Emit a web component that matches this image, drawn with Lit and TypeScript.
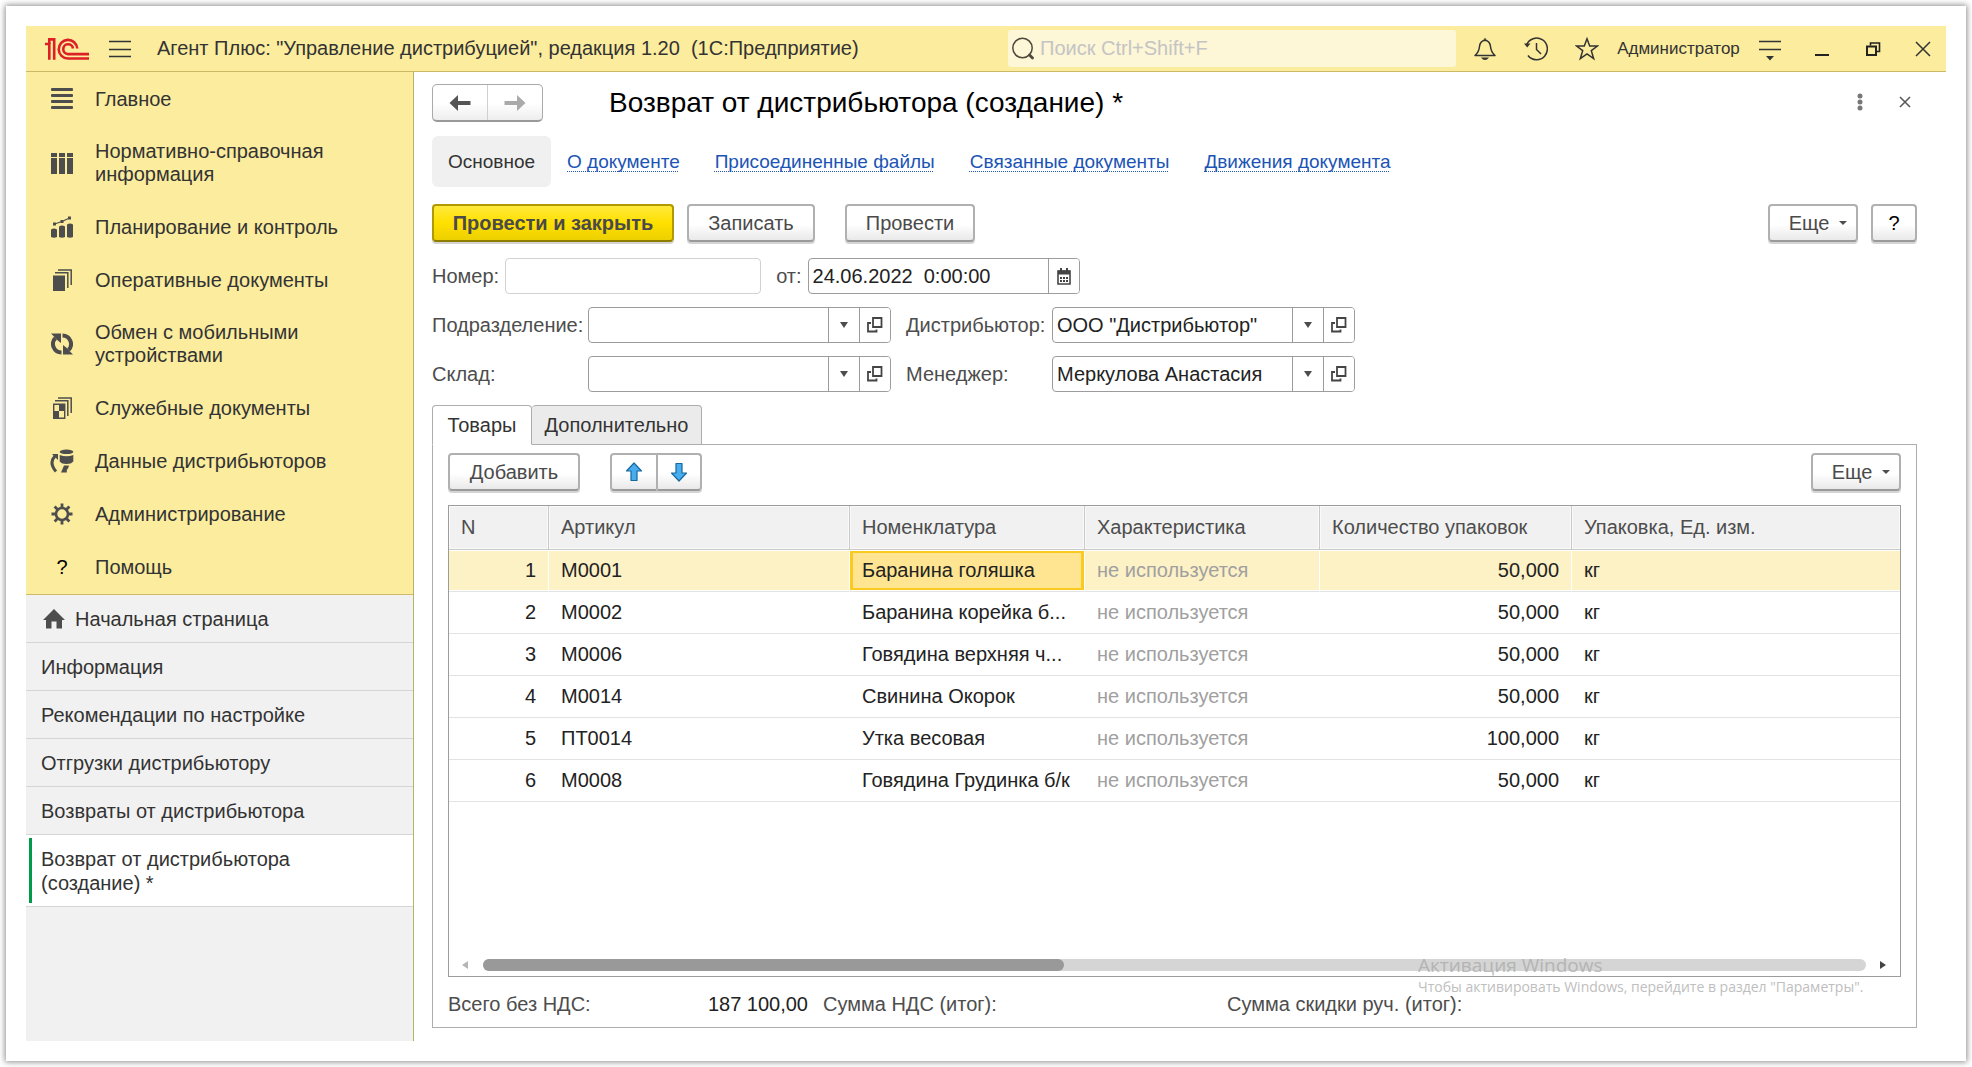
import { LitElement, html, css, svg, nothing } from "lit";
import { customElement, property } from "lit/decorators.js";
import { classMap } from "lit/directives/class-map.js";

const icon = (w: number, h: number, body: unknown) =>
  html`<svg width=${w} height=${h} viewBox="0 0 ${w} ${h}" fill="none" aria-hidden="true">${body}</svg>`;

const C = "#4d4d4d";

const logo = icon(44, 22, svg`
  <g stroke="#dd1f26" stroke-width="2.600">
    <path d="M0 6H4.300V21.800"/><path d="M3 1.400H9.200V21.800"/><path d="M4.300 1.200V6"/>
    <path d="M32.300 10.500A9.300 9.300 0 1 0 23 20.500H44"/>
    <path d="M28 10.500A4.900 4.900 0 1 0 23 16.100H44"/>
  </g>`);

const burger = icon(22, 18, svg`<path d="M0 1.500H22M0 9.500H22M0 16.500H22" stroke="#333" stroke-width="1.400"/>`);

const menuIcons: Record<string, unknown> = {
  list: icon(22, 22, svg`<path d="M1 1.500H21M1 7.500H21M1 13.500H21M1 19.500H21" stroke=${C} stroke-width="2.800" stroke-linecap="round"/>`),
  table: icon(22, 22, svg`<path d="M0 1h6v4H0zM8 1h6v4H8zM16 1h6v4h-6zM0 6h6v16H0zM8 6h6v16H8zM16 6h6v16h-6z" fill=${C}/>`),
  chart: icon(22, 22, svg`
    <path d="M0 13.500q3-2 6 0v7.500q-3 1.600-6 0zM8 10.500q3-2 6 0v10.500q-3 1.600-6 0zM16 8.500q3-2 6 0v12.500q-3 1.600-6 0z" fill=${C}/>
    <path d="M3.500 8L11 5.500L18.500 2" stroke=${C} stroke-width="1.200"/>
    <path d="M2 6.500h3v3H2zM9.500 4h3v3h-3zM17 0.500h3v3h-3z" fill=${C}/>`),
  docs: icon(22, 22, svg`
    <path d="M2 6.500h12V22H2z" fill=${C}/>
    <path d="M4 3.800H16.800V19M7 1H20.200V16" stroke=${C} stroke-width="1.500"/>`),
  sync: icon(22, 22, svg`
    <path d="M10.500 19.500A8.500 8.500 0 0 1 4.500 5" stroke=${C} stroke-width="4"/>
    <path d="M0 0.500H10V10L6.800 7.500L3 3.500z" fill=${C}/>
    <path d="M11.500 2.500A8.500 8.500 0 0 1 17.500 17" stroke=${C} stroke-width="4"/>
    <path d="M22 21.500H12V12L15.200 14.500L19 18.500z" fill=${C}/>`),
  service: icon(22, 22, svg`
    <path d="M2.700 7.200h11V21.300h-11z" stroke=${C} stroke-width="1.400"/>
    <path d="M8 7h6v7H8zM2 14h6v8H2z" fill=${C}/>
    <path d="M4 3.800H16.800V19M7 1H20.200V16" stroke=${C} stroke-width="1.500"/>`),
  data: icon(24, 24, svg`
    <ellipse cx="16.500" cy="2.800" rx="6.800" ry="2.300" fill=${C}/>
    <path d="M9.700 6q6.800 2.600 13.600 0v6.500q-2 2.500-6.800 2.500t-6.800-2.500z" fill=${C}/>
    <path d="M6 22.500Q-1.500 14 5 7" stroke=${C} stroke-width="3"/>
    <path d="M2 5H8V11z" fill=${C}/>
    <path d="M14 16.500H19Q18.500 19.500 16.800 21V23.500H11z" fill=${C}/>`),
  gear: icon(22, 22, svg`
    <circle cx="11" cy="11" r="6" stroke=${C} stroke-width="2.600"/>
    <path d="M11 0.500V5M11 17V21.500M0.500 11H5M17 11H21.500M3.600 3.600L6.600 6.600M15.400 15.400L18.400 18.400M18.400 3.600L15.400 6.600M6.600 15.400L3.600 18.400" stroke=${C} stroke-width="2.800"/>`),
};

const homeIcon = icon(22, 20, svg`<path d="M11 0L22 11H19V19.500H13.500V12.500H8.500V19.500H3V11H0z" fill="#4d4d4d"/>`);
const searchIcon = icon(24, 24, svg`<circle cx="10.500" cy="11" r="9.700" stroke="#4d4a3c" stroke-width="1.500"/><path d="M17.500 18L20.500 21" stroke="#4d4a3c" stroke-width="2.800" stroke-linecap="round"/>`);
const bellIcon = icon(24, 24, svg`<path d="M2 18.500Q6 15 6.500 9.500Q7 4 12 3.200Q17 4 17.500 9.500Q18 15 22 18.500z" stroke="#333" stroke-width="1.500" stroke-linejoin="round"/><path d="M10.500 2.800a1.500 1.500 0 0 1 3 0zM8 20.500H16Q14 23 12 23T8 20.500z" fill="#333"/>`);
const historyIcon = icon(24, 24, svg`<path d="M2.500 8A10.800 10.800 0 1 1 4 18.500" stroke="#333" stroke-width="1.500"/><path d="M12.500 6V12.500L17 17" stroke="#333" stroke-width="1.500"/><path d="M0 6.500H6.500L3.200 10.500z" fill="#333"/>`);
const starIcon = icon(24, 24, svg`<path d="M12 1.800L14.700 9H22.500L16.300 13.600L18.700 21.700L12 17L5.300 21.700L7.700 13.600L1.500 9H9.300z" stroke="#333" stroke-width="1.500"/>`);
const filterIcon = icon(24, 24, svg`<path d="M1 4.500H23M1 12.500H23" stroke="#333" stroke-width="1.500"/><path d="M8 19H16L12 23.500z" fill="#333"/>`);
const minIcon = icon(24, 24, svg`<path d="M6 18H20" stroke="#222" stroke-width="2"/>`);
const restoreIcon = icon(24, 24, svg`<path d="M7 9.500h9V18H7z" stroke="#222" stroke-width="2"/><path d="M10.500 8.500V6H19.500V14.500H17" stroke="#222" stroke-width="1.600"/>`);
const closeIcon = icon(24, 24, svg`<path d="M5 5L19 19M19 5L5 19" stroke="#333" stroke-width="1.500"/>`);
const smallClose = icon(24, 24, svg`<path d="M7 7L17 17M17 7L7 17" stroke="#555" stroke-width="1.500"/>`);
const dotsIcon = icon(24, 24, svg`<circle cx="12" cy="6" r="2.500" fill="#777"/><circle cx="12" cy="12" r="2.500" fill="#777"/><circle cx="12" cy="18" r="2.500" fill="#777"/>`);
const arrowLeft = icon(22, 18, svg`<path d="M0.500 9L9 1V7H21.500V11H9V17z" fill="#555"/>`);
const arrowRight = icon(22, 18, svg`<path d="M21.500 9L13 1V7H0.500V11H13V17z" fill="#aaa"/>`);
const upIcon = icon(18, 20, svg`<path d="M9 1L16.500 9H12V18.500H6V9H1.500z" fill="#47adee" stroke="#17689e" stroke-width="1.200" stroke-linejoin="round"/>`);
const downIcon = icon(18, 20, svg`<path d="M9 19L16.500 11H12V1.500H6V11H1.500z" fill="#47adee" stroke="#17689e" stroke-width="1.200" stroke-linejoin="round"/>`);
const caret = icon(8, 4, svg`<path d="M0 0H8L4 4z" fill="#4d4d4d"/>`);
const dropIcon = icon(8, 6, svg`<path d="M0 0H8L4 6z" fill="#4d4d4d"/>`);
const openIcon = icon(16, 16, svg`<path d="M6 1h8.500v9H6z" stroke="#444" stroke-width="1.800"/><path d="M4 6H1V14.500H9.500V12.500" stroke="#444" stroke-width="1.800"/>`);
const calendarIcon = icon(14, 17, svg`
  <path d="M1 3h12v13H1z" stroke="#444" stroke-width="1.600"/><path d="M1 2.500h12v4H1zM3 0h2v3H3zM9 0h2v3H9z" fill="#444"/>
  <path d="M3 9h2v2H3zM6 9h2v2H6zM9 9h2v2H9zM3 12h2v2H3zM6 12h2v2H6zM9 12h2v2H9z" fill="#444"/>`);

const base = css`
  *, *::before, *::after { box-sizing: border-box; }
  svg { display: block; flex: none; }
  button, input { font: inherit; color: inherit; margin: 0; }
  button { cursor: pointer; }
`;

@customElement("ap-field")
class ApField extends LitElement {
  @property() label = "";
  @property() value = "";
  @property() kind: "plain" | "date" | "ref" = "ref";

  static styles = [base, css`
    :host { display: contents; }
    .label { color: #4d4d4d; white-space: nowrap; }
    .box {
      display: flex; height: 36px; width: 303px; background: #fff;
      border: 1px solid #9c9c9c; border-radius: 4px; overflow: hidden;
    }
    .plain { width: 256px; border-color: #d2d2d2; }
    .date { width: 272px; }
    .input { flex: 1; min-width: 0; border: 0; padding: 0 4px; background: none; color: #222; outline: none; }
    .side {
      width: 31px; flex: none; display: grid; place-items: center; padding: 0;
      border: 0; border-left: 1px solid #9c9c9c; background: #fff;
    }
  `];

  render() {
    return html`
      <label class="label" for="field">${this.label}</label>
      <div class=${classMap({ box: true, [this.kind]: true })}>
        <input id="field" class="input" type="text" .value=${this.value} />
        ${this.kind === "date" ? html`<button class="side" aria-label="Календарь">${calendarIcon}</button>` : nothing}
        ${this.kind === "ref" ? html`
          <button class="side" aria-label="Выбрать">${dropIcon}</button>
          <button class="side" aria-label="Открыть">${openIcon}</button>` : nothing}
      </div>`;
  }
}

const sections: [string, string][] = [
  ["list", "Главное"],
  ["table", "Нормативно-справочная информация"],
  ["chart", "Планирование и контроль"],
  ["docs", "Оперативные документы"],
  ["sync", "Обмен с мобильными устройствами"],
  ["service", "Служебные документы"],
  ["data", "Данные дистрибьюторов"],
  ["gear", "Администрирование"],
  ["help", "Помощь"],
];

const openPages = ["Информация", "Рекомендации по настройке", "Отгрузки дистрибьютору", "Возвраты от дистрибьютора"];
const links = ["О документе", "Присоединенные файлы", "Связанные документы", "Движения документа"];
const columns = ["N", "Артикул", "Номенклатура", "Характеристика", "Количество упаковок", "Упаковка, Ед. изм."];
const rows: [string, string, string][] = [
  ["М0001", "Баранина голяшка", "50,000"],
  ["М0002", "Баранина корейка б...", "50,000"],
  ["М0006", "Говядина верхняя ч...", "50,000"],
  ["М0014", "Свинина Окорок", "50,000"],
  ["ПТ0014", "Утка весовая", "100,000"],
  ["М0008", "Говядина Грудинка б/к", "50,000"],
];

@customElement("app-root")
class AppRoot extends LitElement {
  static styles = [base, css`
    :host {
      display: flex; min-height: 100vh; padding: 6px; box-sizing: border-box; background: #fff;
      font: 20px/23px "Liberation Sans", Arial, sans-serif; color: #333;
    }
    .card { flex: 1; min-width: 0; display: flex; flex-direction: column; padding: 20px; background: #fff; box-shadow: 0 0 6px 1px rgba(0, 0, 0, 0.45); }

    .top { display: flex; align-items: center; height: 46px; padding: 0 11px 0 19px; background: #fbec9e; border-bottom: 1px solid #cbb965; }
    .icon-btn { display: grid; place-items: center; padding: 0; border: 0; background: none; }
    .burger { margin: 0 26px 0 20px; }
    .app-title { flex: 1; white-space: pre; }
    .search { display: flex; align-items: center; gap: 4px; width: 448px; height: 37px; padding: 0 4px; border-radius: 3px; background: #fdf6d7; }
    .search-input { flex: 1; min-width: 0; border: 0; padding: 0; background: none; outline: none; }
    .search-input::placeholder { color: #c4c4c4; opacity: 1; }
    .tools { display: flex; gap: 27px; }
    .tools-first { margin-left: 17px; }
    .user { width: 123px; margin: 0 18px; padding: 0; border: 0; background: none; font-size: 17px; text-align: center; }

    .body { flex: 1; display: flex; }
    .side { width: 388px; flex: none; background: #f1f1f1; border-right: 1px solid #bfb067; }
    .sections { padding-top: 1px; background: #fbec9e; border-bottom: 1px solid #cdbb6a; }
    .section { display: flex; align-items: center; gap: 21px; min-height: 53px; padding: 14px 60px 15px 24px; color: inherit; text-decoration: none; }
    .section-icon { width: 24px; display: grid; place-items: center; color: #000; flex: none; }
    .page { display: flex; align-items: center; gap: 10px; padding: 12px 80px 11px 15px; line-height: 24px; border-bottom: 1px solid #d5d5d5; color: inherit; text-decoration: none; }
    .home { padding-left: 17px; }
    .current { position: relative; background: #fff; }
    .current::before { content: ""; position: absolute; left: 3px; top: 3px; bottom: 3px; width: 3px; background: #009a49; }

    .main { flex: 1; min-width: 0; display: flex; flex-direction: column; padding: 12px 29px 13px 18px; }
    .title-row { display: flex; align-items: center; height: 38px; }
    .history { display: flex; width: 111px; height: 38px; border: 1px solid #aaa; border-bottom: 2px solid #999; border-radius: 5px; background: linear-gradient(#fff 50%, #eee); }
    .history-btn { flex: 1; display: grid; place-items: center; padding: 0; border: 0; background: none; }
    .history-btn + .history-btn { border-left: 1px solid #d0d0d0; }
    .title { flex: 1; margin: 0 0 0 66px; font-size: 28px; line-height: 32px; font-weight: 400; color: #000; }
    .title-tools { display: flex; gap: 21px; padding-bottom: 3px; }

    .links { display: flex; align-items: center; gap: 35px; margin-top: 14px; font-size: 19px; }
    .here { width: 119px; padding: 14px 0; margin-right: -19px; border-radius: 6px; background: #f0f0f0; text-align: center; }
    .link { color: #1b54b5; text-decoration: underline dotted 1px; text-underline-offset: 3px; text-decoration-skip-ink: none; }

    .commands { display: flex; gap: 13px; }
    .form-commands { margin-top: 17px; }
    .btn {
      height: 38px; padding: 0 10px; border: 2px solid #b0b0b0; border-bottom-color: #9a9a9a; border-radius: 4px;
      background: linear-gradient(#fff 55%, #e9e9e9); box-shadow: 0 2px #d4d4d4; color: #4a4a4a; white-space: nowrap;
      display: flex; align-items: center; justify-content: center; line-height: 20px;
    }
    .primary { width: 242px; font-weight: 700; border-color: #b09a00; border-bottom-color: #8f7d00; background: linear-gradient(#ffe93c, #ffe000 50%, #ecd000); }
    .post { width: 130px; margin-left: 17px; }
    .save { width: 128px; }
    .more { width: 90px; padding: 0 8px 0 18px; gap: 10px; margin-left: auto; }
    .help { width: 46px; padding: 0; color: #000; }

    .doc-line { display: flex; align-items: center; gap: 15px; margin-top: 16px; }
    .pair { display: flex; align-items: center; gap: 6px; }
    .refs { display: grid; grid-template-columns: 142px 304px 132px 304px; column-gap: 14px; row-gap: 13px; align-items: center; margin-top: 13px; }

    .tabs { display: flex; margin-top: 13px; }
    .tab { width: 170px; height: 40px; padding: 0; border: 1px solid #adadad; border-radius: 4px 4px 0 0; background: #ebebeb; margin-bottom: -1px; }
    .tab + .tab { border-left: 0; }
    .tab-on { width: 100px; background: #fff; border-bottom-color: #fff; z-index: 1; }
    .panel { flex: 1; display: flex; flex-direction: column; border: 1px solid #adadad; padding: 8px 15px 10px; }
    .add { width: 132px; }
    .move { display: flex; margin-left: 17px; }
    .step { width: 47px; padding: 0; }
    .step:first-child { border-radius: 4px 0 0 4px; border-right-width: 1px; }
    .step:last-child { border-radius: 0 4px 4px 0; border-left-width: 1px; width: 45px; }

    .grid { flex: 1; display: flex; flex-direction: column; margin-top: 14px; border: 1px solid #9c9c9c; }
    .table { width: 100%; table-layout: fixed; border-collapse: separate; border-spacing: 0; color: #222; }
    .th { height: 44px; padding: 0 12px; text-align: left; font-weight: 400; color: #4d4d4d; background: #f1f1f1; border-right: 1px solid #c9c9c9; border-bottom: 1px solid #c9c9c9; box-shadow: inset 0 0 0 1px #fafafa; }
    .th:last-child { border-right: 0; }
    .c-n { width: 100px; } .c-art { width: 301px; } .c-nom { width: 235px; } .c-char { width: 235px; } .c-qty { width: 252px; }
    .td { height: 42px; padding: 0 12px; border-bottom: 1px solid #e3e3e3; white-space: nowrap; }
    .num { text-align: right; padding-right: 13px; }
    .dim { color: #a0a0a0; }
    .selected .td { background: #fdf1c6; border-right: 1px solid #fff; box-shadow: inset 0 1px #fff, inset 0 -1px #fff; }
    .selected .num { padding-right: 12px; }
    .selected .td:last-child { border-right: 0; }
    .selected .focus { background: #ffe592; box-shadow: inset 0 1px #fff, inset 0 -1px #fff, inset 0 0 0 3px #fbca20; }
    .scroll { display: flex; align-items: center; margin-top: auto; padding: 0 14px 5px 13px; }
    .track { flex: 1; height: 12px; margin: 0 14px 0 15px; border-radius: 6px; background: #d5d5d5; }
    .thumb { height: 12px; width: 42%; border-radius: 6px; background: #999; }

    .totals { display: grid; grid-template-columns: 160px 200px 15px 404px 1fr; margin-top: 16px; padding-bottom: 1px; color: #4d4d4d; white-space: nowrap; }
    .total { text-align: right; color: #222; }
    .col4 { grid-column: 4; }

    .notice { position: absolute; left: 1418px; top: 953px; color: #a9a9a9; opacity: 0.75; font-family: "Open Sans", "Noto Sans", sans-serif; pointer-events: none; }
    .notice-title { font-size: 19px; line-height: 25px; }
    .notice-text { font-size: 14px; line-height: 18px; }
  `];

  render() {
    return html`
      <div class="card">
        <header class="top">
          ${logo}
          <button class="icon-btn burger" aria-label="Меню">${burger}</button>
          <span class="app-title">Агент Плюс: "Управление дистрибуцией", редакция 1.20  (1С:Предприятие)</span>
          <label class="search">${searchIcon}<input class="search-input" type="text" placeholder="Поиск Ctrl+Shift+F" aria-label="Поиск" /></label>
          <div class="tools tools-first">
            <button class="icon-btn" aria-label="Оповещения">${bellIcon}</button>
            <button class="icon-btn" aria-label="История">${historyIcon}</button>
            <button class="icon-btn" aria-label="Избранное">${starIcon}</button>
          </div>
          <button class="user">Администратор</button>
          <div class="tools">
            <button class="icon-btn" aria-label="Настройки">${filterIcon}</button>
            <button class="icon-btn" aria-label="Свернуть">${minIcon}</button>
            <button class="icon-btn" aria-label="Восстановить">${restoreIcon}</button>
            <button class="icon-btn" aria-label="Закрыть">${closeIcon}</button>
          </div>
        </header>
        <div class="body">
          <aside class="side">
            <nav class="sections">
              ${sections.map(([key, text]) => html`
                <a class="section" href="#"><span class="section-icon">${menuIcons[key] ?? "?"}</span><span>${text}</span></a>`)}
            </nav>
            <nav>
              <a class="page home" href="#">${homeIcon}Начальная страница</a>
              ${openPages.map((p) => html`<a class="page" href="#">${p}</a>`)}
              <a class="page current" href="#" aria-current="page">Возврат от дистрибьютора (создание) *</a>
            </nav>
          </aside>
          <main class="main">
            <div class="title-row">
              <div class="history">
                <button class="history-btn" aria-label="Назад">${arrowLeft}</button>
                <button class="history-btn" aria-label="Вперед">${arrowRight}</button>
              </div>
              <h1 class="title">Возврат от дистрибьютора (создание) *</h1>
              <div class="title-tools">
                <button class="icon-btn" aria-label="Действия">${dotsIcon}</button>
                <button class="icon-btn" aria-label="Закрыть форму">${smallClose}</button>
              </div>
            </div>
            <nav class="links">
              <span class="here">Основное</span>
              ${links.map((l) => html`<a class="link" href="#">${l}</a>`)}
            </nav>
            <div class="commands form-commands">
              <button class="btn primary">Провести и закрыть</button>
              <button class="btn save">Записать</button>
              <button class="btn post">Провести</button>
              <button class="btn more">Еще ${caret}</button>
              <button class="btn help">?</button>
            </div>
            <div class="doc-line">
              <div class="pair"><ap-field kind="plain" label="Номер:"></ap-field></div>
              <div class="pair"><ap-field kind="date" label="от:" value="24.06.2022  0:00:00"></ap-field></div>
            </div>
            <div class="refs">
              <ap-field label="Подразделение:"></ap-field>
              <ap-field label="Дистрибьютор:" value='ООО "Дистрибьютор"'></ap-field>
              <ap-field label="Склад:"></ap-field>
              <ap-field label="Менеджер:" value="Меркулова Анастасия"></ap-field>
            </div>
            <div class="tabs" role="tablist">
              <button class="tab tab-on" role="tab" aria-selected="true">Товары</button>
              <button class="tab" role="tab" aria-selected="false">Дополнительно</button>
            </div>
            <section class="panel">
              <div class="commands">
                <button class="btn add">Добавить</button>
                <div class="move">
                  <button class="btn step" aria-label="Вверх">${upIcon}</button>
                  <button class="btn step" aria-label="Вниз">${downIcon}</button>
                </div>
                <button class="btn more">Еще ${caret}</button>
              </div>
              <div class="grid">
                <table class="table">
                  <colgroup><col class="c-n" /><col class="c-art" /><col class="c-nom" /><col class="c-char" /><col class="c-qty" /><col /></colgroup>
                  <thead><tr>${columns.map((c) => html`<th class="th">${c}</th>`)}</tr></thead>
                  <tbody>
                    ${rows.map(([art, name, qty], i) => html`
                      <tr class=${classMap({ selected: i === 0 })}>
                        <td class="td num">${i + 1}</td>
                        <td class="td">${art}</td>
                        <td class=${classMap({ td: true, focus: i === 0 })}>${name}</td>
                        <td class="td dim">не используется</td>
                        <td class="td num">${qty}</td>
                        <td class="td">кг</td>
                      </tr>`)}
                  </tbody>
                </table>
                <div class="scroll">
                  ${icon(6, 8, svg`<path d="M6 0V8L0 4z" fill="#b5b5b5"/>`)}
                  <div class="track"><div class="thumb"></div></div>
                  ${icon(6, 8, svg`<path d="M0 0V8L6 4z" fill="#444"/>`)}
                </div>
              </div>
              <div class="totals">
                <span>Всего без НДС:</span><span class="total">187 100,00</span>
                <span class="col4">Сумма НДС (итог):</span><span>Сумма скидки руч. (итог):</span>
              </div>
            </section>
          </main>
        </div>
        <div class="notice">
          <div class="notice-title">Активация Windows</div>
          <div class="notice-text">Чтобы активировать Windows, перейдите в раздел "Параметры".</div>
        </div>
      </div>`;
  }
}
